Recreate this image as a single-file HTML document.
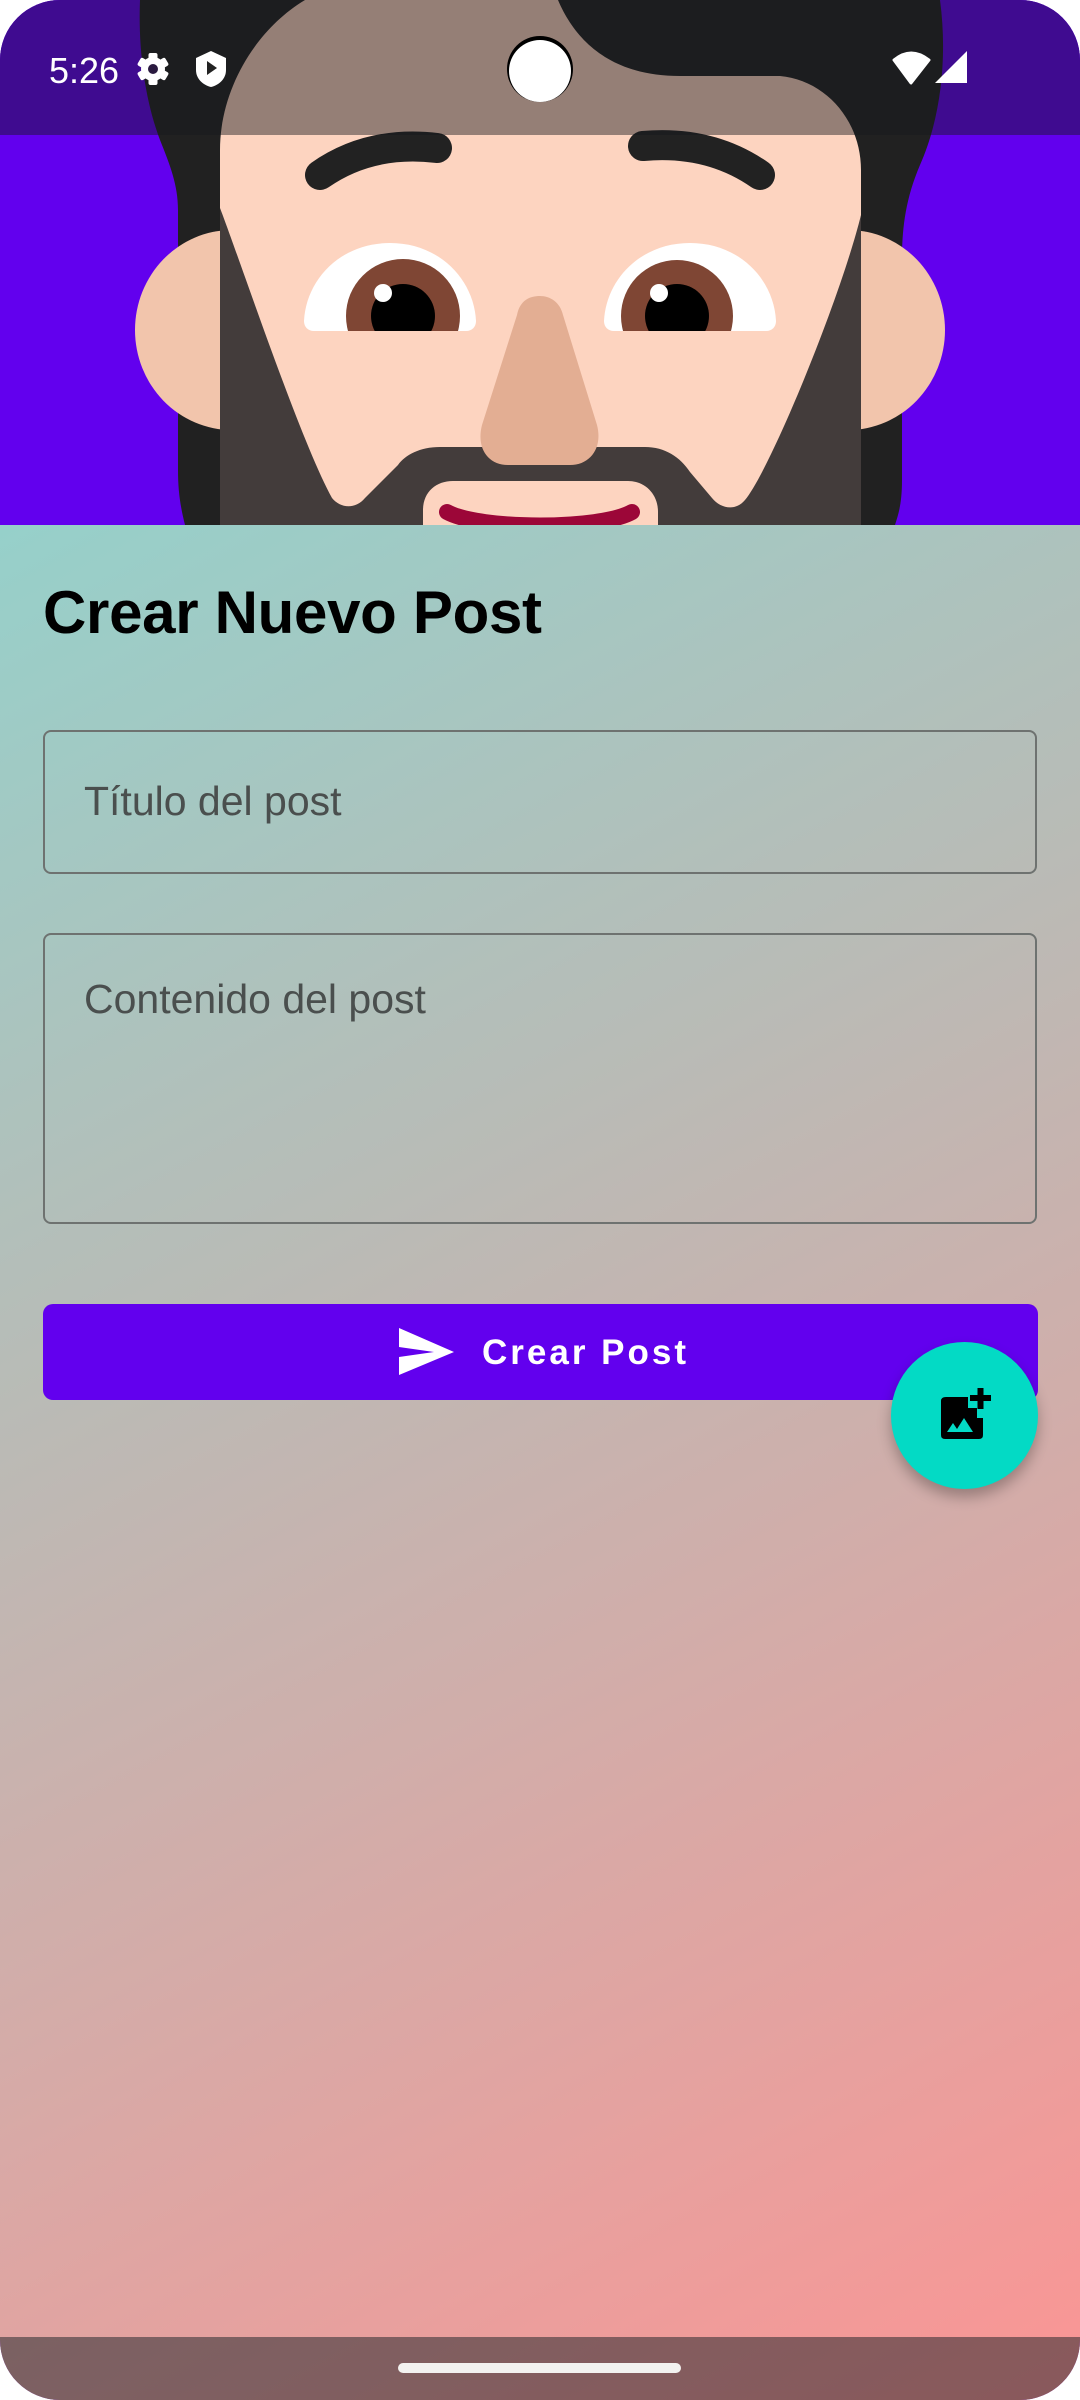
<!DOCTYPE html>
<html><head><meta charset="utf-8"><style>
html,body{margin:0;padding:0;}
body{width:1080px;height:2400px;position:relative;overflow:hidden;background:#fff;font-family:"Liberation Sans",Arial,sans-serif;}
#screen{position:absolute;left:0;top:0;width:1080px;height:2400px;border-radius:60px;overflow:hidden;background:#6200ee;}
.grad{position:absolute;left:0;top:525px;width:1080px;height:1875px;background:linear-gradient(152deg,#96d0ca 0%,#bbbab5 38%,#fb9594 100%);}
.hdr{position:absolute;left:0;top:0;width:1080px;height:525px;}
.title{position:absolute;left:43px;top:578px;font-size:60px;font-weight:bold;color:#000;line-height:70px;letter-spacing:-0.3px;}
.field{position:absolute;left:43px;width:990px;border:2.5px solid #6e7270;border-radius:8px;}
.ph{position:absolute;left:84px;font-size:41px;color:#4a4f4e;}
.btn{position:absolute;left:43px;top:1304px;width:995px;height:96px;background:#6200ee;border-radius:10px;}
.fab{position:absolute;left:891px;top:1342px;width:147px;height:147px;border-radius:50%;background:#03dac5;box-shadow:0 8px 14px rgba(0,0,0,0.28);}
.nav{position:absolute;left:0;top:2337px;width:1080px;height:63px;background:rgba(0,15,22,0.45);}
.handle{position:absolute;left:398px;top:2363px;width:283px;height:10px;border-radius:5px;background:#f3f2f0;}
</style></head><body>
<div id="screen">
<div class="grad"></div>
<svg class="hdr" width="1080" height="525" viewBox="0 0 1080 525">
<rect width="1080" height="525" fill="#6200ee"/>
<path d="M140,0 L940,0 C948,60 940,120 920,165 C905,200 902,230 902,260 L902,480 C902,505 898,515 895,525 L185,525 C180,505 178,490 178,470 L178,210 C178,185 170,165 160,140 C145,100 138,50 140,0 Z" fill="#212121"/>
<ellipse cx="232" cy="330" rx="97" ry="100" fill="#f2c5ac"/>
<ellipse cx="848" cy="330" rx="97" ry="100" fill="#f2c5ac"/>
<path d="M220,525 L220,150 C220,90 255,30 305,0 L558,0 C575,40 610,76 680,76 L780,76 C825,80 861,120 861,170 L861,525 Z" fill="#fdd4c0"/>
<path d="M220,208 L220,525 L861,525 L861,215 C840,300 770,470 745,500 C735,512 720,508 712,498 L690,472 C680,457 665,447 645,447 L440,447 C420,447 405,455 398,465 L365,498 C355,510 340,508 332,498 C300,440 240,260 220,208 Z" fill="#433c3b"/>
<path d="M423,525 L423,510 C423,492 436,481 453,481 L628,481 C645,481 658,494 658,512 L658,525 Z" fill="#fdd4c0"/>
<path d="M447,512 C480,530 600,530 632,512" stroke="#9c0638" stroke-width="16" fill="none" stroke-linecap="round"/>
<path d="M517,315 C520,300 530,296 540,296 C550,296 560,302 563,315 L597,425 C603,448 590,465 570,465 L508,465 C488,465 476,448 482,425 Z" fill="#e3ae93"/>
<path d="M320,175 Q370,140 437,148" stroke="#222" stroke-width="30" fill="none" stroke-linecap="round"/>
<path d="M643,146 Q710,140 760,175" stroke="#222" stroke-width="30" fill="none" stroke-linecap="round"/>
<defs>
<clipPath id="le"><path d="M304,321 C306,280 340,243 390,243 C440,243 474,280 476,321 C476,327 472,331 466,331 L314,331 C308,331 304,327 304,321 Z"/></clipPath>
<clipPath id="re"><path d="M604,321 C606,280 640,243 690,243 C740,243 774,280 776,321 C776,327 772,331 766,331 L614,331 C608,331 604,327 604,321 Z"/></clipPath>
</defs>
<g clip-path="url(#le)"><rect x="300" y="240" width="180" height="95" fill="#fff"/><circle cx="403" cy="316" r="57" fill="#7f4634"/><circle cx="403" cy="316" r="32" fill="#000"/></g>
<circle cx="383" cy="293" r="9" fill="#fff"/>
<g clip-path="url(#re)"><rect x="600" y="240" width="180" height="95" fill="#fff"/><circle cx="677" cy="316" r="56" fill="#7f4634"/><circle cx="677" cy="316" r="32" fill="#000"/></g>
<circle cx="659" cy="293" r="9" fill="#fff"/>
<rect width="1080" height="135" fill="rgba(22,25,28,0.45)"/>
<text x="49" y="83" font-family="Liberation Sans, sans-serif" font-size="36" fill="#fff">5:26</text>
<g transform="translate(153,69)" fill="#fff">
<circle r="12"/>
<g><rect x="-4.5" y="-16" width="9" height="32" rx="2"/><rect x="-4.5" y="-16" width="9" height="32" rx="2" transform="rotate(60)"/><rect x="-4.5" y="-16" width="9" height="32" rx="2" transform="rotate(120)"/></g>
<circle r="5" fill="#2a1a40"/>
</g>
<path d="M196,58 L211,51 L226,58 L226,70 C226,79 219,85 211,87 C203,85 196,79 196,70 Z" fill="#fff"/>
<path d="M207,61 L217,68 L207,75 Z" fill="#222"/>
<circle cx="540" cy="69" r="33" fill="#000"/>
<circle cx="540" cy="71" r="31" fill="#fff"/>
<path d="M894,60 Q911,46 929,60 L911,83 Z" fill="#fff" stroke="#fff" stroke-width="3" stroke-linejoin="round"/>
<path d="M967,51 L967,83 L935,83 Z" fill="#fff"/>
</svg>

<div class="title">Crear Nuevo Post</div>
<div class="field" style="top:730px;height:140px;"></div>
<div class="ph" style="top:778px;">Título del post</div>
<div class="field" style="top:933px;height:287px;"></div>
<div class="ph" style="top:976px;">Contenido del post</div>

<div class="btn"></div>
<svg style="position:absolute;left:0;top:0" width="1080" height="1500">
<path d="M399,1328 L454,1352 L399,1375 L399,1357 L434,1352 L399,1347 Z" fill="#fff"/>
</svg>
<div style="position:absolute;left:482px;top:1333px;font-size:35px;font-weight:bold;color:#fff;letter-spacing:3px;">Crear Post</div>

<div class="fab"></div>
<svg style="position:absolute;left:0;top:0" width="1080" height="1500">
<path d="M946,1397 L968,1397 L968,1408 L977,1408 L977,1418 L983,1418 L983,1435 Q983,1439 979,1439 L945,1439 Q941,1439 941,1435 L941,1401 Q941,1397 946,1397 Z" fill="#000"/>
<path d="M947,1432 L953,1423 L957,1429 L964,1418 L973,1432 Z" fill="#03dac5"/>
<rect x="970" y="1395" width="21" height="6" fill="#000"/>
<rect x="977.5" y="1388" width="6" height="21" fill="#000"/>
</svg>

<div class="nav"></div>
<div class="handle"></div>
</div>
</body></html>
